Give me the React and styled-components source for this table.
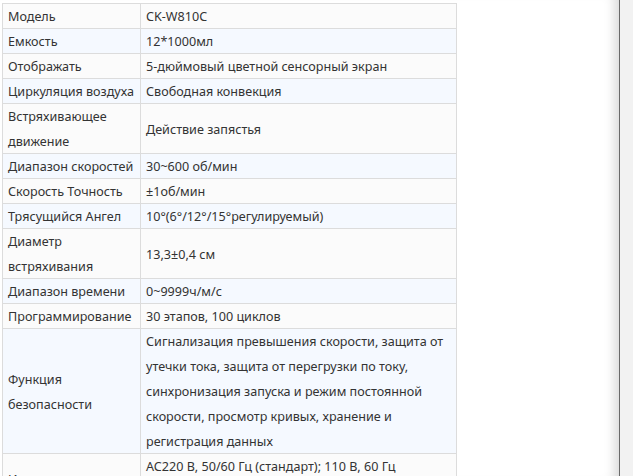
import React from "react";
import styled, { createGlobalStyle } from "styled-components";

const Global = createGlobalStyle`
  html, body { margin: 0; padding: 0; background: #fff; }
  body { font-family: "Noto Sans", "Open Sans", sans-serif; color: #333; }
`;

const Page = styled.div`
  display: flex;
  height: 476px;
  overflow: hidden;
`;

const Main = styled.main`
  flex: 1;
  padding: 3px 0 0 2px;
  box-shadow: inset -14px 0 12px -10px rgba(0, 0, 0, 0.16);
`;

const Divider = styled.div`
  width: 1px;
  background: #6a6a6a;
`;

const Side = styled.aside`
  width: 13px;
  background: #f2f2f2;
`;

const Table = styled.div`
  width: 455px;
  box-sizing: border-box;
  border-left: 1px solid #dcdcdc;
  border-bottom: 1px solid #dcdcdc;
  font-size: 12.6px;
  line-height: 25px;
`;

const Row = styled.div`
  display: grid;
  grid-template-columns: 138px 316px;
  border-top: 1px solid #dcdcdc;
  margin-top: -1px;
  background: ${(p) => (p.$alt ? "#f5f9ff" : "#fbfbfb")};
  &:first-child { margin-top: 0; }
`;

const Cell = styled.div`
  display: flex;
  align-items: center;
  box-sizing: border-box;
  padding: 0 5px;
  border-right: 1px solid #dcdcdc;
  white-space: nowrap;
`;

const rows = [
  ["Модель", "CK-W810C"],
  ["Емкость", "12*1000мл"],
  ["Отображать", "5-дюймовый цветной сенсорный экран"],
  ["Циркуляция воздуха", "Свободная конвекция"],
  [["Встряхивающее", "движение"], "Действие запястья"],
  ["Диапазон скоростей", "30~600 об/мин"],
  ["Скорость Точность", "±1об/мин"],
  ["Трясущийся Ангел", "10°(6°/12°/15°регулируемый)"],
  [["Диаметр", "встряхивания"], "13,3±0,4 см"],
  ["Диапазон времени", "0~9999ч/м/с"],
  ["Программирование", "30 этапов, 100 циклов"],
  [
    ["Функция", "безопасности"],
    [
      "Сигнализация превышения скорости, защита от",
      "утечки тока, защита от перегрузки по току,",
      "синхронизация запуска и режим постоянной",
      "скорости, просмотр кривых, хранение и",
      "регистрация данных",
    ],
  ],
  ["Источник питания", ["AC220 В, 50/60 Гц (стандарт); 110 В, 60 Гц", "(опционально)"]],
];

const Lines = ({ v }) =>
  Array.isArray(v) ? (
    <span>
      {v.map((l, i) => (
        <React.Fragment key={i}>
          {i > 0 && <br />}
          {l}
        </React.Fragment>
      ))}
    </span>
  ) : (
    <span>{v}</span>
  );

export default function App() {
  return (
    <>
      <Global />
      <Page>
        <Main>
          <Table>
            {rows.map(([k, v], i) => (
              <Row key={i} $alt={i % 2 === 1}>
                <Cell>
                  <Lines v={k} />
                </Cell>
                <Cell>
                  <Lines v={v} />
                </Cell>
              </Row>
            ))}
          </Table>
        </Main>
        <Divider />
        <Side />
      </Page>
    </>
  );
}
